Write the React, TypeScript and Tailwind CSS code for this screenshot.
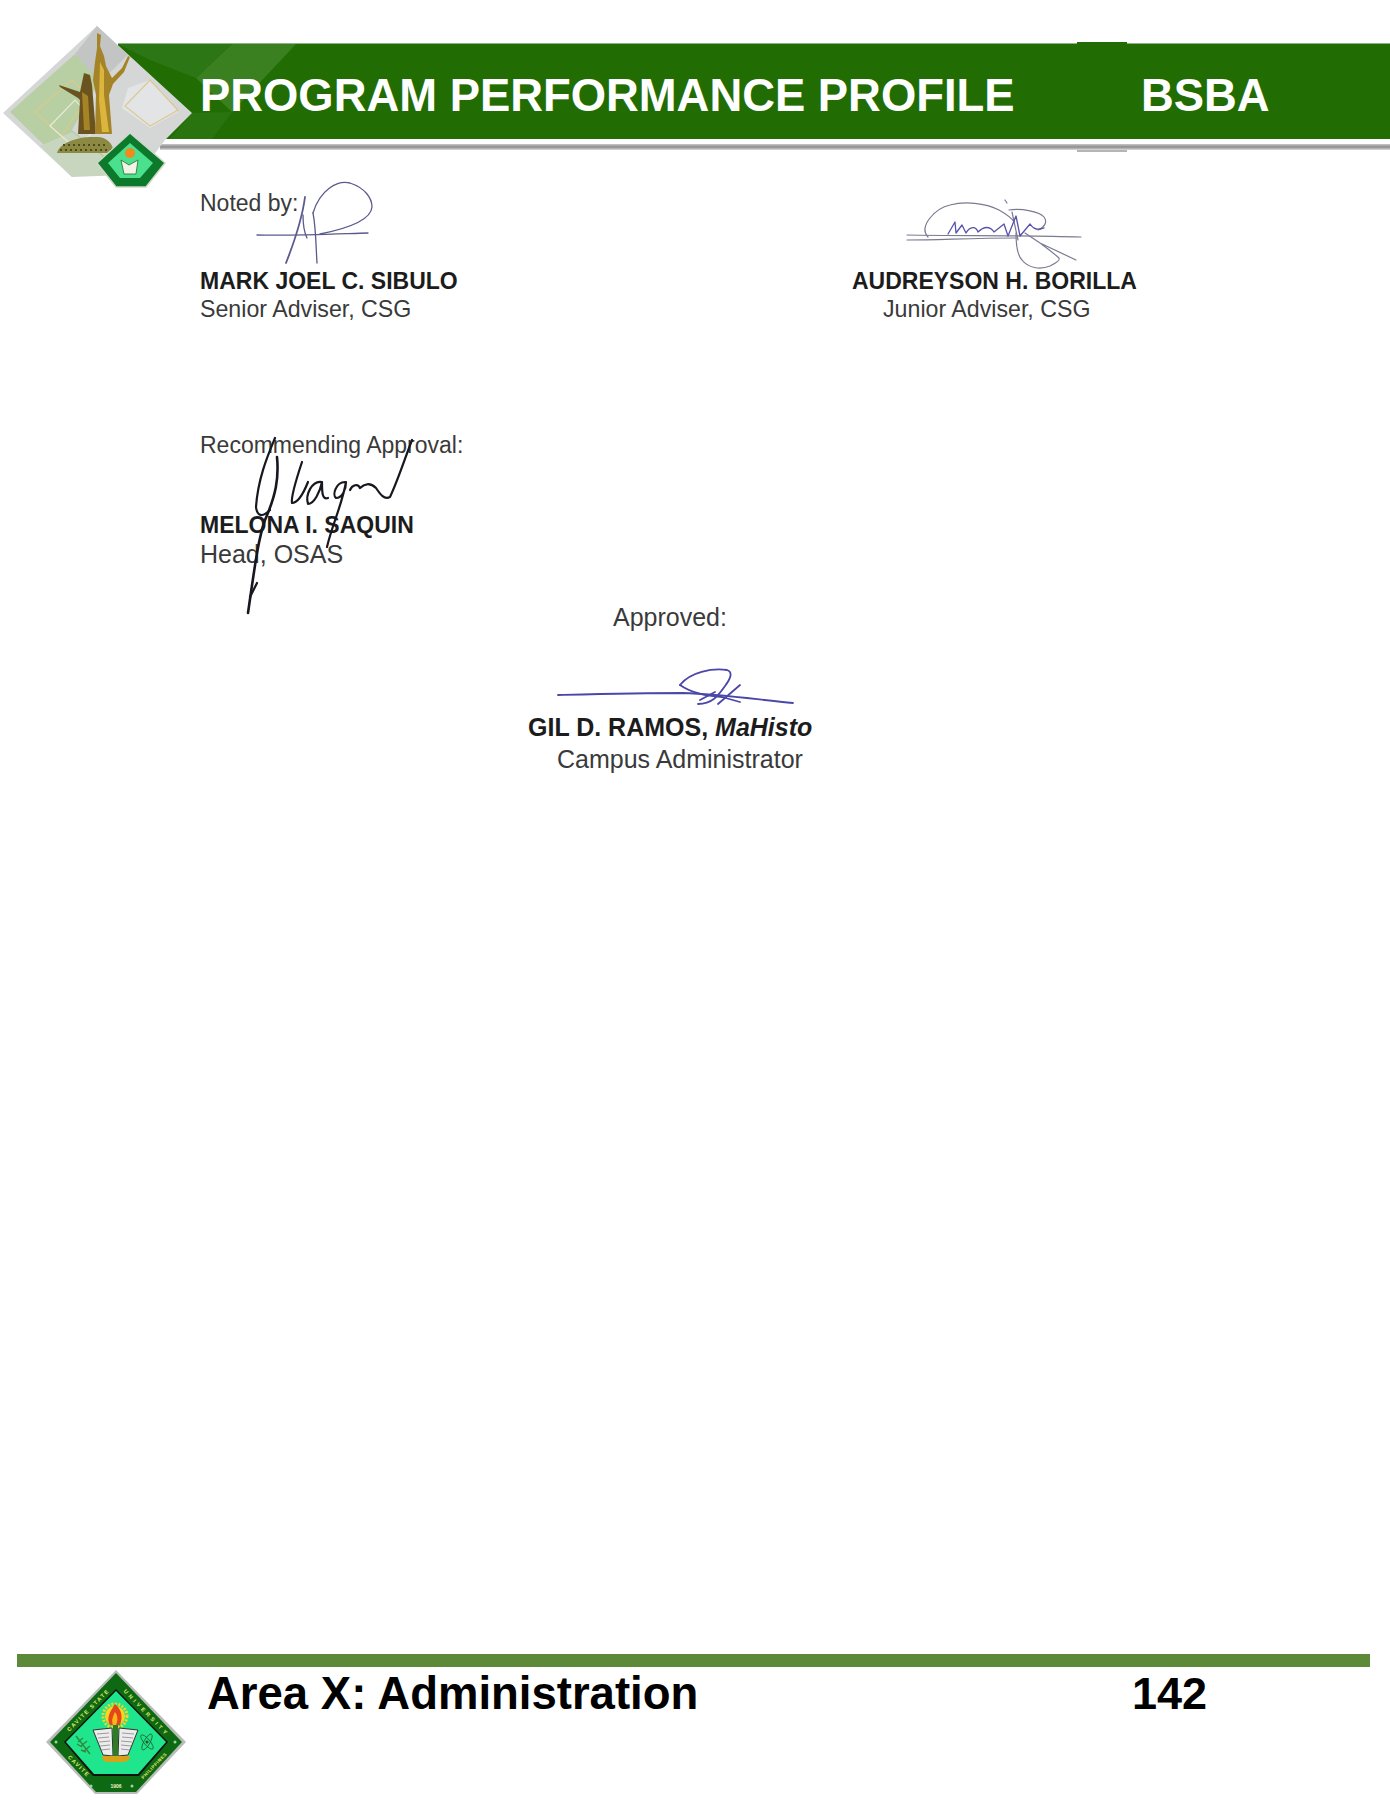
// Program performance profile, signature page
function HeaderLogo() {
  return (
    <svg className="absolute left-0 top-0" width="320" height="195" viewBox="0 0 320 195">
      {/* lighter shapes on the band */}
      <polygon points="232,44 296,44 232,112 196,78" fill="#3a8020" />
      <polygon points="192,113 232,112 212,139 170,139" fill="#2a7410" />
      <polygon points="118,44 232,44 196,78 150,60" fill="#2c7615" />
      {/* diamond backdrop */}
      <polygon points="97,26 192,113 165,140 150,160 72,177 3,113" fill="#d5d7d6" />
      <polygon points="10,112 75,54 100,80 72,130 125,172 72,172" fill="#b7cfa2" />
      <polygon points="72,132 125,175 72,177 40,146" fill="#c8d6bf" />
      <polygon points="97,26 128,55 100,82 75,54" fill="#c3c5c5" />
      <polygon points="128,88 150,80 178,112 150,128 122,108" fill="#e3e4e5" />
      <g fill="none" stroke="#dcc98f" strokeWidth="1.2">
        <polygon points="125,106 150,80 178,110 150,126" />
        <polygon points="35,112 72,80 88,96 62,136" />
      </g>
      <polygon points="50,126 75,100 100,126 75,148" fill="none" stroke="#e8ecd8" strokeWidth="1.2" />
      {/* statue */}
      <path d="M84,73 L90,75 L92,85 L96,134 L78,134 L80,100 L78,98 L60,87 L59,85 L80,92 Z" fill="#6b5320" />
      <path d="M97,33 L101,35 L100,46 L104,56 L106,66 L112,78 L122,68 L128,56 L130,57 L124,72 L113,84 L109,95 L112,134 L95,134 L96,95 L93,80 L95,62 L97,48 Z" fill="#a58427" />
      <path d="M100,62 L104,70 L104,95 L109,132 L102,132 L99,100 Z" fill="#dcb53c" />
      <path d="M82,92 L88,96 L90,130 L84,130 Z" fill="#a58427" />
      <path d="M57,153 C60,142 80,136 95,137 C105,136 113,142 114,153 Z" fill="#8c8a42" />
      <path d="M60,150 L112,150 M63,145 L108,145" stroke="#4d4a1c" strokeWidth="2" strokeDasharray="2 3" />
      {/* small seal */}
      <polygon points="130,133 165,163 146,187 116,187 97,163" fill="#0c7a2a" stroke="#cfd8c8" strokeWidth="1.5" />
      <polygon points="130,143 153,163 140,178 120,178 108,163" fill="#4be08e" />
      <polygon points="121,160 129,165 138,160 136,174 124,174" fill="#f2f2e6" stroke="#1f6d2c" strokeWidth="0.8" />
      <circle cx="130" cy="153" r="5" fill="#ef8a1d" />
    </svg>
  );
}

function CampusSeal() {
  return (
    <svg width="140" height="125" viewBox="0 0 140 125" className="shrink-0">
      <polygon points="70,0 140,72 91,124 49,124 0,72" fill="#b9bdb9" />
      <polygon points="70,3 136,72 90,122 50,122 4,72" fill="#0d6a12" />
      <polygon points="70,19 122,72 93,106 47,106 18,72" fill="#111" />
      <polygon points="70,21 120,72 92,104 48,104 20,72" fill="#1fe58c" />
      <g fontFamily="Liberation Sans, sans-serif" fontWeight="700" fontSize="5.5" fill="#e8e86a" textAnchor="middle">
        <text transform="translate(43,42) rotate(-45)" textLength="56">CAVITE STATE</text>
        <text transform="translate(98,43) rotate(46)" textLength="60">UNIVERSITY</text>
        <text transform="translate(31,97) rotate(45)" textLength="27">CAVITE</text>
        <text transform="translate(109,97) rotate(-46)" fontSize="4.5" textLength="34">PHILIPPINES</text>
        <text x="70" y="118" fontSize="5" fill="#f2f2d0">1906</text>
      </g>
      <circle cx="10" cy="72" r="1.5" fill="#9fd09f" />
      <circle cx="129" cy="72" r="1.5" fill="#9fd09f" />
      <circle cx="45" cy="116" r="1.5" fill="#9fd09f" />
      <circle cx="86" cy="116" r="1.5" fill="#9fd09f" />
      {/* torch */}
      <circle cx="69" cy="46" r="10" fill="#ffd21f" />
      <circle cx="69" cy="46" r="12" fill="none" stroke="#ffd21f" strokeWidth="3" strokeDasharray="2 1.5" />
      <path d="M69,34 C76,40 77,47 74,55 L64,55 C60,48 64,42 69,34 Z" fill="#e4461b" />
      <path d="M69,42 C72,46 72,50 70,55 L67,55 C65,51 67,46 69,42 Z" fill="#ffb31a" />
      {/* open book */}
      <polygon points="47,60 66,58 67,86 57,85" fill="#ececec" stroke="#333" strokeWidth="1" />
      <polygon points="92,60 73,58 72,86 82,85" fill="#ececec" stroke="#333" strokeWidth="1" />
      <g stroke="#777" strokeWidth="0.7">
        <path d="M51,64 L63,63 M52,68 L63,67 M53,72 L64,71 M54,76 L64,75 M55,80 L64,79" />
        <path d="M88,64 L76,63 M87,68 L76,67 M86,72 L75,71 M85,76 L75,75 M84,80 L75,79" />
      </g>
      <rect x="67" y="55" width="5" height="31" fill="#2e7d24" />
      <path d="M56,86 L84,86 C84,90 80,92 76,92 L62,92 C59,92 56,90 56,86 Z" fill="#d8a31a" />
      {/* leaf and atom */}
      <g stroke="#2e8b3c" strokeWidth="1.4" fill="none">
        <path d="M30,66 L44,84 M32,72 L37,68 M35,76 L41,71 M38,81 L44,76 M31,74 L36,77 M35,80 L40,82" />
      </g>
      <g stroke="#1f5d2c" strokeWidth="0.8" fill="none">
        <ellipse cx="101" cy="72" rx="3" ry="9" transform="rotate(30 101 72)" />
        <ellipse cx="101" cy="72" rx="3" ry="9" transform="rotate(-40 101 72)" />
        <circle cx="101" cy="72" r="1.2" fill="#1f5d2c" />
      </g>
    </svg>
  );
}

function Signatures() {
  return (
    <svg className="absolute left-0 top-0 pointer-events-none" width="1390" height="800" viewBox="0 0 1390 800" fill="none" strokeLinecap="round" strokeLinejoin="round">
      {/* Sibulo */}
      <g stroke="#5b5a8c" strokeWidth="1.3">
        <path d="M257,235 C290,236 335,234 368,233" />
        <path d="M305,197 C302,220 295,240 286,263" strokeWidth="1.8" />
        <path d="M303,215 C303,225 304,232 307,238" />
        <path d="M313,213 C316,228 316,248 317,263" />
        <path d="M313,213 C320,190 337,180 350,183 C365,188 372,198 372,207 C371,220 350,228 320,234" />
      </g>
      {/* Borilla */}
      <g stroke="#7a7a92" strokeWidth="1.2">
        <path d="M907,235 C960,236 1020,235 1081,237" />
        <path d="M907,240 C940,240 970,238 1016,238" />
        <path d="M928,237 C918,226 936,208 950,205 C965,201 985,203 999,210 C1006,214 1012,218 1014,222" />
        <path d="M1009,210 C1022,208 1040,212 1044,217 C1048,222 1044,228 1038,230" />
        <path d="M1016,233 C1016,245 1018,256 1022,260 C1028,268 1040,270 1050,266 C1058,262 1060,260 1059,258 C1050,250 1044,246 1040,243 L1025,233 M1040,243 L1076,260" />
        <path d="M1005,200 L1007,203" />
        <path d="M1012,212 L1018,240" />
      </g>
      <path d="M948,234 L955,222 L956,233 L962,225 L966,233 C970,226 976,226 978,232 C984,226 990,226 994,232 L1004,224 L1008,236 L1016,216 L1020,236 L1030,224 C1034,230 1038,230 1044,228" stroke="#5552a8" strokeWidth="1.3" />
      {/* Saquin */}
      <g stroke="#17171f" strokeWidth="2.2">
        <path d="M275,438 C268,455 258,478 256,507 C257,516 262,518 270,510" />
        <path d="M277,457 C279,478 276,495 265,520 C258,540 255,565 248,613" strokeWidth="2.6" />
        <path d="M257,583 L250,597" />
        <path d="M302,462 C296,480 291,498 292,503 C298,503 304,492 308,482" />
        <path d="M322,482 C312,480 305,495 308,504 C314,504 320,492 322,482 C322,492 322,500 328,498" />
        <path d="M345,482 C336,482 332,495 336,498 C342,498 346,490 346,482 C342,505 332,525 327,547" />
        <path d="M350,490 C352,485 358,483 360,488 C364,484 370,482 376,488 C380,494 384,500 390,497 C398,480 405,458 412,440" />
      </g>
      {/* Ramos */}
      <g stroke="#4a47a8" strokeWidth="1.8">
        <path d="M558,695 C600,694 640,693 683,693 C720,694 760,700 793,703" />
        <path d="M680,685 C690,672 712,668 727,670 C733,672 731,678 725,686 C718,696 712,704 698,704" />
        <path d="M680,685 C690,692 705,696 722,697 L740,702" />
        <path d="M740,685 L718,704" />
        <path d="M700,700 L715,692" />
      </g>
    </svg>
  );
}

export default function App() {
  return (
    <div className="relative flex h-[1800px] w-[1390px] flex-col overflow-hidden bg-white font-['Liberation_Sans',Arial,sans-serif] text-[23px] leading-[28px] text-[#3a3a3a]">
      <header>
        <div className="relative mt-[43px] ml-[118px] flex h-[96px] items-center border-t border-[#8fb37f] bg-[#216d03] pl-[82px] pt-[9px] text-[45.4px] font-bold leading-[50px] text-white">
          <h1 className="relative z-10 w-[941px]">PROGRAM PERFORMANCE PROFILE</h1>
          <span>BSBA</span>
          <span className="absolute -top-[2px] left-[959px] h-[2px] w-[50px] bg-[#216d03]" />
        </div>
        <div className="relative mt-[5px] ml-[160px] h-[6px] bg-gradient-to-b from-[#c9c9c9] via-[#8c8c8c] to-[#dddddd]">
          <span className="absolute -bottom-[2px] left-[917px] h-[2px] w-[50px] bg-[#b5b5b5]" />
        </div>
      </header>
      <HeaderLogo />

      <main className="relative">
        <div className="flex pl-[200px]">
          <div className="w-[652px] pt-[39px]">
            <p>Noted by:</p>
            <p className="mt-[50px] font-bold text-[#1c1c1c]">MARK JOEL C. SIBULO</p>
            <p className="text-[23.2px]">Senior Adviser, CSG</p>
          </div>
          <div className="pt-[117px]">
            <p className="font-bold text-[#1c1c1c]">AUDREYSON H. BORILLA</p>
            <p className="pl-[31px] text-[23.2px]">Junior Adviser, CSG</p>
          </div>
        </div>

        <div className="mt-[108px] pl-[200px]">
          <p>Recommending Approval:</p>
          <p className="mt-[52px] font-bold text-[#1c1c1c]">MELONA I. SAQUIN</p>
          <p className="mt-px text-[25px]">Head, OSAS</p>
        </div>

        <div className="mt-[35px] pl-[528px] text-[25px]">
          <p className="pl-[85px]">Approved:</p>
          <p className="mt-[82px] font-bold text-[#1c1c1c]">
            GIL D. RAMOS, <em>MaHisto</em>
          </p>
          <p className="mt-1 pl-[29px]">Campus Administrator</p>
        </div>
      </main>
      <Signatures />

      <footer className="mt-auto h-[146px]">
        <div className="ml-[17px] h-[13px] w-[1353px] bg-[#5c8a38]" />
        <div className="flex pl-[46px] pt-[3px]">
          <CampusSeal />
          <h2 className="ml-[21px] -mt-px w-[925px] text-[45.5px] font-bold leading-[50px] text-black">Area X: Administration</h2>
          <span className="-mt-px text-[45px] font-bold leading-[50px] text-black">142</span>
        </div>
      </footer>
    </div>
  );
}
